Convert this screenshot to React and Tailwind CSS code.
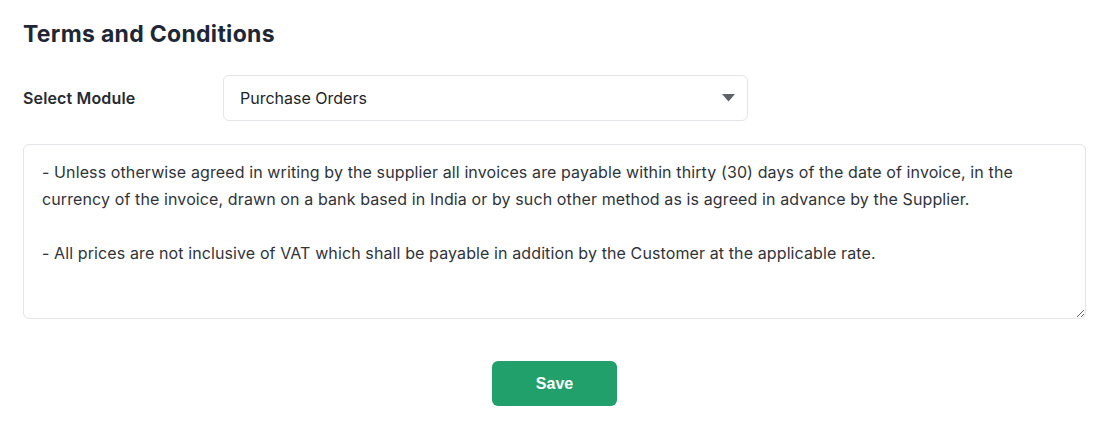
import React from 'react';

const terms = `- Unless otherwise agreed in writing by the supplier all invoices are payable within thirty (30) days of the date of invoice, in the currency of the invoice, drawn on a bank based in India or by such other method as is agreed in advance by the Supplier.

- All prices are not inclusive of VAT which shall be payable in addition by the Customer at the applicable rate.`;

export default function App() {
  return (
    <div className="w-[1112px] h-[432px] bg-white px-[23px] pt-[19px] font-['Inter',sans-serif] text-[#1f2937]">
      <div className="w-[1063px]">
        <h2 className="text-[23px] font-bold leading-[30px] text-[#1e2735] tracking-[0.3px]">Terms and Conditions</h2>

        <div className="mt-[26px] flex items-center">
          <label className="w-[200px] text-[16px] font-semibold tracking-[0.15px] text-[#252b33]">Select Module</label>
          <div className="relative w-[525px]">
            <select
              defaultValue="po"
              className="w-full h-[46px] appearance-none rounded-md border border-[#e3e5e8] bg-white pl-4 pr-10 text-[16px] text-[#212529] outline-none"
            >
              <option value="po">Purchase Orders</option>
              <option value="so">Sales Orders</option>
              <option value="inv">Invoices</option>
            </select>
            <svg className="pointer-events-none absolute right-[13px] top-[19px]" width="13" height="8" viewBox="0 0 13 8">
              <path d="M0 0 H13 L6.5 7.5 Z" fill="#5f6368" />
            </svg>
          </div>
        </div>

        <textarea
          defaultValue={terms}
          className="mt-[23px] block w-full h-[175px] rounded-md border border-[#e3e5e8] px-[18px] pt-[14px] text-[16px] leading-[27px] tracking-[0.11px] text-[#2f343b] outline-none"
        />

        <div className="mt-[42px] flex justify-center">
          <button className="w-[125px] h-[45px] rounded-md bg-[#22a06b] font-['Liberation_Sans',Arial,sans-serif] text-[16px] font-bold text-white">
            Save
          </button>
        </div>
      </div>
    </div>
  );
}
